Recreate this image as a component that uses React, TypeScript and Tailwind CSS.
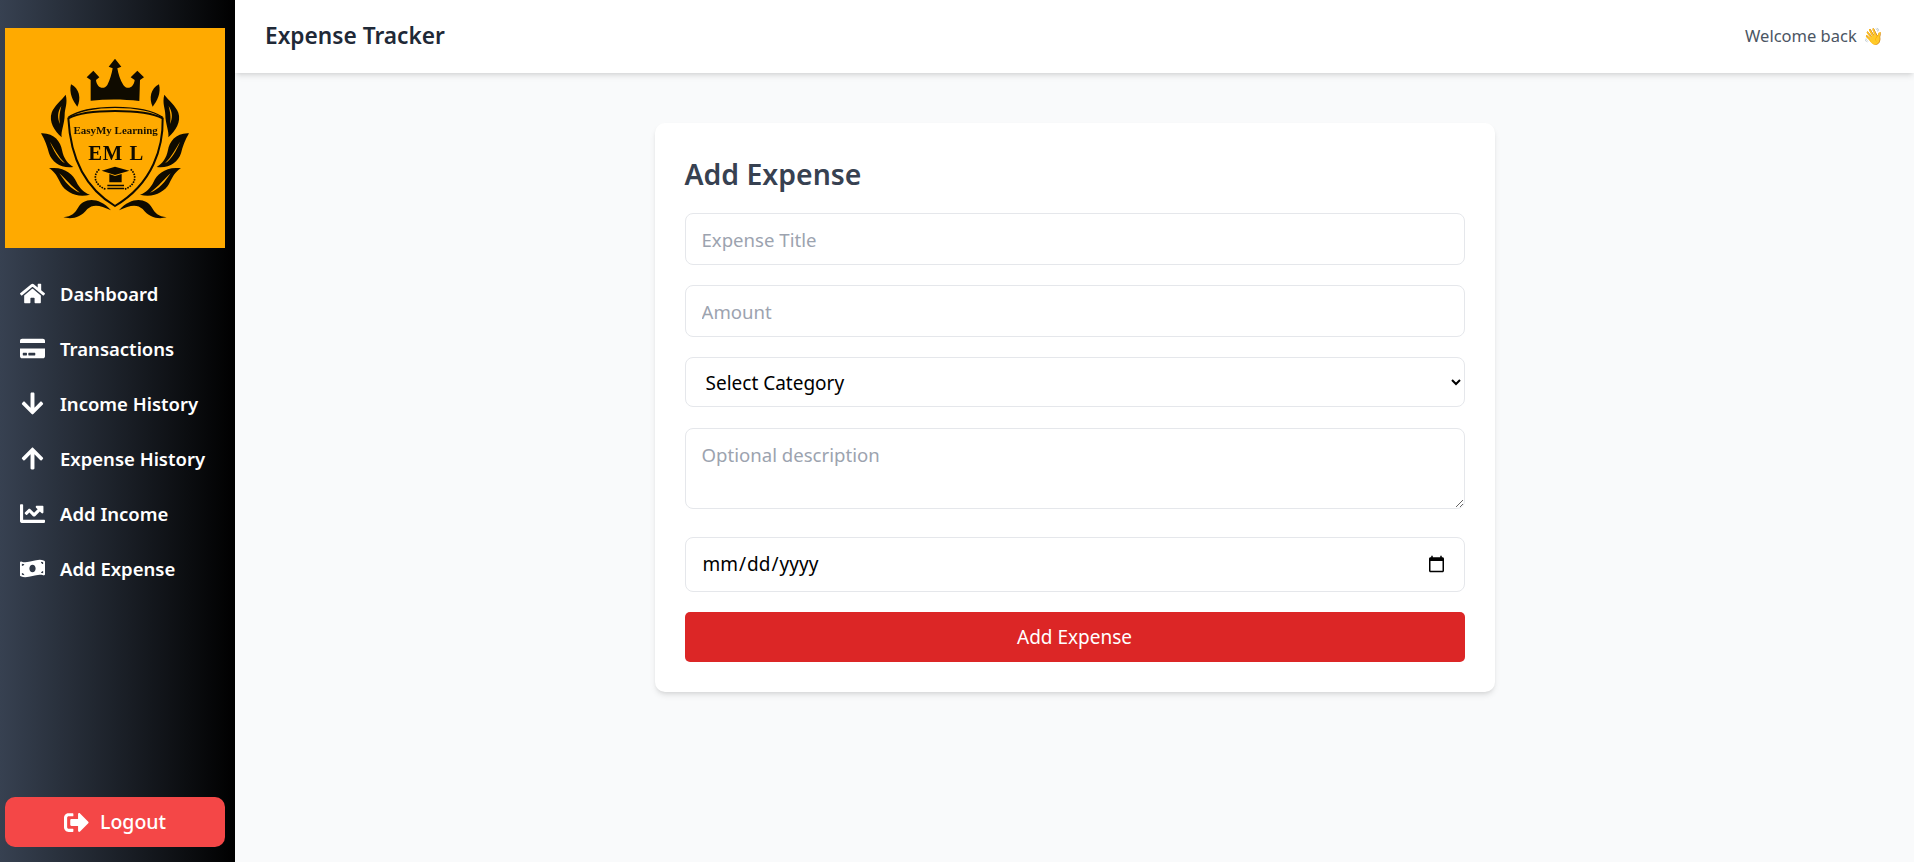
import React from "react";
import { FaHome, FaCreditCard, FaArrowDown, FaArrowUp, FaChartLine, FaMoneyBillWave, FaSignOutAlt } from "react-icons/fa";

const nav = [
  { label: "Dashboard", Icon: FaHome },
  { label: "Transactions", Icon: FaCreditCard },
  { label: "Income History", Icon: FaArrowDown },
  { label: "Expense History", Icon: FaArrowUp },
  { label: "Add Income", Icon: FaChartLine },
  { label: "Add Expense", Icon: FaMoneyBillWave },
];

const leaves = (
  <g fill="#0f0b00">
    <path d="M213 253 C238 265 244 295 232 320 C220 305 206 280 213 253Z" />
    <path d="M197 284 C204 310 194 325 194 345 C194 370 182 395 185 412 C163 392 146 365 155 338 C162 318 185 300 197 284Z" />
    <path d="M123 400 C162 398 182 425 186 450 C191 475 202 490 220 501 C183 506 156 487 147 460 C142 440 135 420 123 400Z" />
    <path d="M147 505 C192 498 219 523 229 545 C239 565 252 578 270 584 C230 594 198 577 183 552 C173 532 165 515 147 505Z" />
    <path d="M190 652 C215 650 225 640 235 622 C250 595 295 588 333 631 C300 614 278 612 262 627 C242 654 215 658 190 652Z" />
    <path d="M184 318 C172 335 172 355 180 372 C176 350 180 335 184 318Z" fill="#ffaa00" />
    <path d="M150 425 C162 445 175 470 195 490 C175 478 160 450 150 425Z" fill="#ffaa00" />
    <path d="M178 520 C195 535 215 560 240 578 C212 568 195 545 178 520Z" fill="#ffaa00" />
  </g>
);

function Logo() {
  return (
    <svg viewBox="15 84 660 660" className="block h-[220px] w-[220px] shrink-0">
      <rect x="15" y="84" width="660" height="660" fill="#ffaa00" />
      <g className="blur-[0.4px]">
        <path
          fill="#0f0b00"
          d="M272 302 L272 240 L260 232 L280 212 L298 232 L288 240 C290 262 310 272 322 255 C330 240 335 222 338 205 L326 200 L345 176 L364 200 L352 205 C355 222 360 240 370 255 C382 272 402 262 404 240 L392 232 L412 212 L432 232 L420 240 L418 303 C370 297 320 297 272 302Z"
        />
        {leaves}
        <g transform="matrix(-1 0 0 1 690 0)">{leaves}</g>
        <path
          fill="none"
          stroke="#0f0b00"
          strokeWidth="6"
          d="M205 355 C260 326 430 326 488 355 C490 440 460 550 345 618 C240 555 210 450 205 355Z"
        />
        <path fill="none" stroke="#0f0b00" strokeWidth="4" d="M205 352 C260 312 430 312 488 352" />
        <text x="347" y="403" textAnchor="middle" fontFamily="'Liberation Serif', serif" fontWeight="700" fontSize="33" fill="#1a1200" textLength="253" lengthAdjust="spacingAndGlyphs">
          EasyMy Learning
        </text>
        <text x="347" y="480" textAnchor="middle" fontFamily="'Liberation Serif', serif" fontWeight="700" fontSize="62" fill="#0f0b00" textLength="165" lengthAdjust="spacing">
          EM L
        </text>
        <path fill="#0f0b00" d="M305 512 L345 500 L388 512 L345 525Z M328 522 L345 528 L365 522 L365 547 L328 547Z" />
        <path fill="#0f0b00" d="M322 554 H372 V559 H322Z M322 563 H372 V568 H322Z" />
        <path fill="none" stroke="#0f0b00" strokeWidth="5" strokeDasharray="5 3" d="M298 508 C278 525 282 555 318 568 M392 508 C412 525 408 555 374 568" />
      </g>
    </svg>
  );
}

const field = "w-full border border-[#e5e7eb] rounded-[8px] bg-white outline-none placeholder:text-[#9ca3af]";

export default function App() {
  return (
    <div className="flex h-screen overflow-hidden bg-[#f9fafb] font-['Noto_Sans',sans-serif]">
      <aside className="flex w-[235px] shrink-0 flex-col bg-[linear-gradient(to_right,#374151,#000000)] px-[5px] pt-[28px] pb-[15px] text-white">
        <Logo />
        <nav className="mt-[18px] flex flex-col px-[15px]">
          {nav.map(({ label, Icon }) => (
            <div key={label} className="flex h-[55px] items-center gap-[15px]">
              <span className="flex w-[25px] justify-center">
                <Icon className="text-[25px]" />
              </span>
              <span className="text-[18.5px] font-semibold whitespace-nowrap">{label}</span>
            </div>
          ))}
        </nav>
        <button className="mt-auto flex h-[50px] w-[220px] items-center justify-center gap-[11px] rounded-[10px] bg-[#f44747] text-[19.5px] font-medium text-white">
          <FaSignOutAlt className="text-[25px]" />
          Logout
        </button>
      </aside>
      <div className="flex min-w-0 flex-1 flex-col">
        <header className="flex h-[73px] shrink-0 items-center justify-between bg-white px-[30px] shadow-md">
          <h1 className="text-[22.7px] font-semibold text-[#1f2937]">Expense Tracker</h1>
          <div className="text-[16.5px] text-[#4b5563]">
            Welcome back <span className="ml-[2px]">👋</span>
          </div>
        </header>
        <main className="flex-1">
          <div className="mx-auto mt-[50px] flex w-[840px] flex-col rounded-[10px] bg-white p-[30px] shadow-md">
            <h2 className="mb-[15px] h-[45px] text-[28.4px] leading-[43px] font-semibold text-[#374151]">Add Expense</h2>
            <input className={`${field} mb-[20px] h-[52px] px-[16px] text-[18.6px]`} placeholder="Expense Title" />
            <input className={`${field} mb-[20px] h-[52px] px-[16px] text-[18.6px]`} placeholder="Amount" />
            <select className={`${field} mb-[21px] h-[50px] px-[16px] pt-[1px] text-[19px] text-black`} defaultValue="">
              <option value="">Select Category</option>
            </select>
            <textarea className={`${field} mb-[28px] h-[81px] px-[16px] pt-[12px] pb-[8px] text-[18.6px]`} placeholder="Optional description" />
            <input type="date" className={`${field} mb-[20px] h-[55px] px-[16px] text-[19px] text-black`} />
            <button className="h-[50px] w-full rounded-[5px] bg-[#dc2626] text-[19px] text-white">Add Expense</button>
          </div>
        </main>
      </div>
    </div>
  );
}
